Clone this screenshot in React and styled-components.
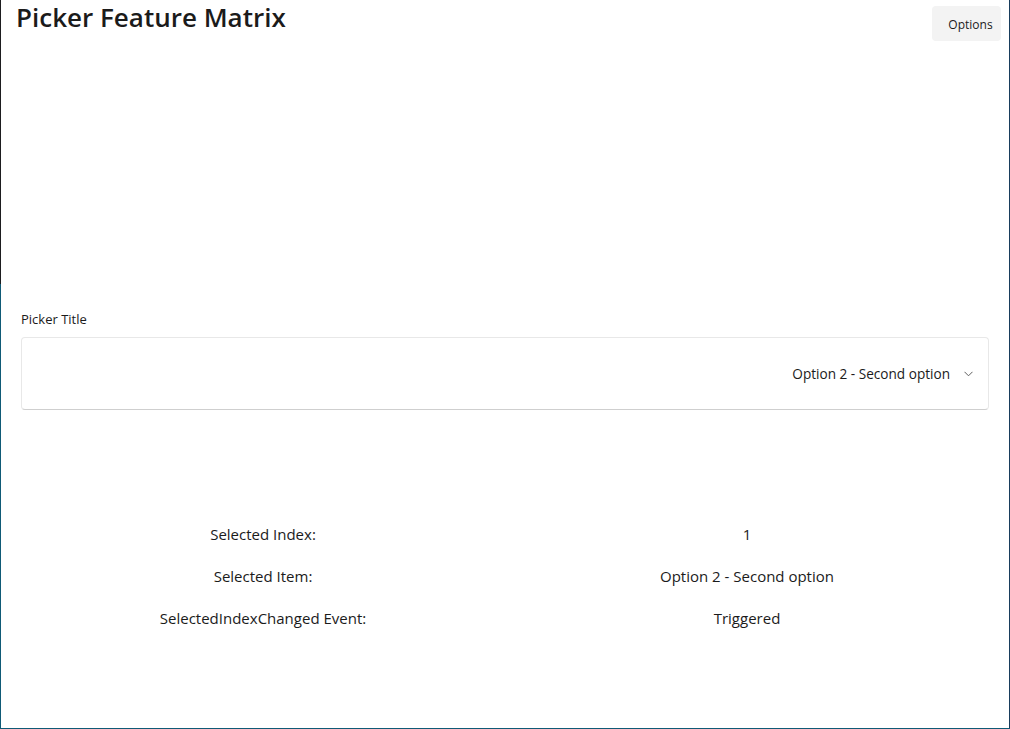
import React from "react";
import styled, { createGlobalStyle } from "styled-components";

const GlobalStyle = createGlobalStyle`
  html, body {
    margin: 0;
    padding: 0;
    background: #ffffff;
  }
  body {
    font-family: "Open Sans", "Noto Sans", sans-serif;
    color: #1b1b1b;
  }
`;

// desktop strip that shows on the left and bottom edge of the window
const Desktop = styled.div`
  width: 1010px;
  height: 729px;
  box-sizing: border-box;
  padding: 0 0 1px 1px;
  background: linear-gradient(to bottom, #1d1d1f 0, #1d1d1f 284px, #0f5a76 284px, #0f5a76 100%);
`;

const Window = styled.div`
  height: 100%;
  box-sizing: border-box;
  background: #ffffff;
  border-right: 1px solid #183c5c;
  display: flex;
  flex-direction: column;
`;

const Header = styled.div`
  display: flex;
  justify-content: space-between;
  align-items: flex-start;
  padding: 0 8px 0 15px;
`;

const Title = styled.h1`
  margin: 0;
  font-size: 26px;
  line-height: 34px;
  font-weight: 600;
  color: #1b1b1b;
`;

const ToolButton = styled.button`
  margin-top: 6px;
  width: 69px;
  height: 35px;
  border: none;
  border-radius: 4px;
  background: #f3f3f3;
  font-family: inherit;
  font-size: 12px;
  color: #1b1b1b;
  padding: 2px 0 0 8px;
`;

const Content = styled.div`
  padding: 268px 20px 0 20px;
  display: flex;
  flex-direction: column;
`;

const FieldLabel = styled.div`
  font-size: 13px;
  line-height: 20px;
  color: #1b1b1b;
`;

const PickerBox = styled.div`
  margin-top: 8px;
  height: 73px;
  box-sizing: border-box;
  border: 1px solid #e8e8e8;
  border-bottom-color: #cfcfcf;
  border-radius: 4px;
  display: flex;
  align-items: center;
  justify-content: flex-end;
  padding: 0 15px 0 12px;
  gap: 14px;
  font-size: 13.6px;
`;

const Chevron = styled.svg`
  width: 9px;
  height: 6px;
  flex: none;
`;

const InfoGrid = styled.div`
  margin-top: 103px;
  display: grid;
  grid-template-columns: 1fr 1fr;
  grid-auto-rows: 42px;
  align-items: center;
  text-align: center;
  font-size: 15px;
`;

const Cell = styled.div`
  line-height: 20px;
`;

const rows = [
  ["Selected Index:", "1"],
  ["Selected Item:", "Option 2 - Second option"],
  ["SelectedIndexChanged Event:", "Triggered"],
];

export default function App() {
  return (
    <>
      <GlobalStyle />
      <Desktop>
        <Window>
          <Header>
            <Title>Picker Feature Matrix</Title>
            <ToolButton>Options</ToolButton>
          </Header>
          <Content>
            <FieldLabel>Picker Title</FieldLabel>
            <PickerBox>
              <span>Option 2 - Second option</span>
              <Chevron viewBox="0 0 9 6">
                <path d="M0.5 0.8 L4.5 4.8 L8.5 0.8" fill="none" stroke="#5f5f5f" strokeWidth="1" />
              </Chevron>
            </PickerBox>
            <InfoGrid>
              {rows.map(([label, value]) => (
                <React.Fragment key={label}>
                  <Cell>{label}</Cell>
                  <Cell>{value}</Cell>
                </React.Fragment>
              ))}
            </InfoGrid>
          </Content>
        </Window>
      </Desktop>
    </>
  );
}
